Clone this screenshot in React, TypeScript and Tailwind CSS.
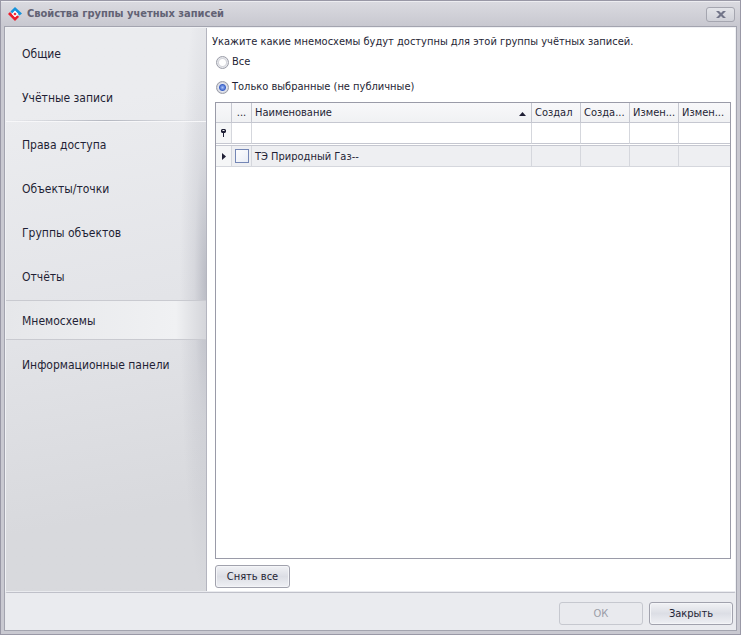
import React, { useState } from "react";
import clsx from "clsx";

const accountPages = ["Общие", "Учётные записи"];
const accessPages = [
  "Права доступа",
  "Объекты/точки",
  "Группы объектов",
  "Отчёты",
  "Мнемосхемы",
  "Информационные панели",
];

const columns = ["Создал", "Созда...", "Измен...", "Измен..."];

const schemes = [{ id: 1, name: "ТЭ Природный Газ--" }];

function Logo() {
  return (
    <svg width="14" height="14" viewBox="0 0 14 14" aria-hidden="true">
      <path d="M7 0L14 6.5L11.5 8.5L7 4L4.5 6.5L2.4 4.6Z" fill="#1593dc" />
      <path d="M2 5L7 10.2L9 8.4L11.2 9.8L7 14L0 7Z" fill="#ec1c2b" />
      <path d="M7 3.6L10.4 7L7 10.2L3.8 7Z" fill="#fff" />
      <path d="M7 5.4L8.6 7L7 8.6L5.4 7Z" fill="#ec1c2b" />
    </svg>
  );
}

function NavItem({
  title,
  active,
  onClick,
}: {
  title: string;
  active: boolean;
  onClick: () => void;
}) {
  return (
    <button
      type="button"
      onClick={onClick}
      className={clsx(
        "h-10 w-full border-y pt-[2px] pl-4 text-left text-[12px]",
        active
          ? "border-[#c9cad0] bg-linear-to-r from-[#e6e7ea] via-[#f0f1f3] via-85% to-[#d4d5da]"
          : "border-transparent"
      )}
    >
      {title}
    </button>
  );
}

function DialogButton({
  children,
  className,
  disabled,
}: {
  children: React.ReactNode;
  className: string;
  disabled?: boolean;
}) {
  return (
    <button
      type="button"
      disabled={disabled}
      className={clsx(
        "h-[23px] rounded-[3px] border pt-[2px]",
        disabled
          ? "border-[#c6c8cf] bg-[#e9eaee] text-[#9b9da8]"
          : "border-[#a1a2ad] bg-linear-to-b from-[#f1f2f5] via-[#dcdee5] to-[#eff0f4] shadow-[inset_0_0_0_1px_#f4f5f8]",
        className
      )}
    >
      {children}
    </button>
  );
}

function Radio({
  label,
  checked,
  onChange,
}: {
  label: string;
  checked: boolean;
  onChange: () => void;
}) {
  return (
    <label className="flex h-[25px] items-center gap-[3px] pl-1">
      <input
        type="radio"
        name="scope"
        checked={checked}
        onChange={onChange}
        className="size-[13px] appearance-none rounded-full border border-[#9b9da8] bg-[radial-gradient(circle,#ffffff_3px,#d4d5db_4px,#e6e7eb_5px)] checked:bg-[radial-gradient(circle_at_center,#a9c4fa_0px,#3c62c8_3px,#e4e6ee_4px,#c9cbd3_6px)]"
      />
      {label}
    </label>
  );
}

export default function App() {
  const [page, setPage] = useState("Мнемосхемы");
  const [scope, setScope] = useState("selected");
  const [selected, setSelected] = useState<number[]>([]);

  const toggle = (id: number) =>
    setSelected((ids) =>
      ids.includes(id) ? ids.filter((i) => i !== id) : [...ids, id]
    );

  return (
    <div className="flex h-screen flex-col border border-[#9998a6] bg-[#c9c9d1] font-['DejaVu_Sans_Condensed','DejaVu_Sans',sans-serif] text-[11px] text-[#1f1f35]">
      <header className="flex h-[25px] shrink-0 items-center gap-[5px] border-t border-[#ededf1] bg-linear-to-b from-[#dadae0] to-[#c8c8d0] pr-[5px] pl-[7px]">
        <Logo />
        <h1 className="flex-1 pt-px font-bold text-[#626274]">
          Свойства группы учетных записей
        </h1>
        <button
          type="button"
          aria-label="Закрыть окно"
          className="flex h-[15px] w-[29px] items-center justify-center rounded-[3px] border border-[#a5a6b0] bg-linear-to-b from-[#e3e4e9] to-[#d0d1d8]"
        >
          <svg width="10" height="7" viewBox="0 0 10 7">
            <path d="M0 0H3L5 2L7 0H10L6.5 3.5L10 7H7L5 5L3 7H0L3.5 3.5Z" fill="#73768a" />
          </svg>
        </button>
      </header>

      <div className="mx-[3px] mb-[3px] flex min-h-0 flex-1 flex-col border border-[#a3a4af] bg-[#eaebef]">
        <div className="flex min-h-0 flex-1 rounded-[2px] border border-[#f0f1f4] border-b-[#bfc0c9] pb-px">
          <nav className="w-[201px] shrink-0 border-r border-[#b4b5bf] bg-linear-170 from-[#ebecef] from-15% via-[#e3e4e8] via-50% to-[#d8d9dd] to-85%">
            <div className="flex h-full flex-col gap-1 bg-[radial-gradient(26px_56%_at_right_45%,#a0a2ae99,#a0a2ae33_45%,#a0a2ae00)] pt-[5px]">
              {accountPages.map((p) => (
                <NavItem key={p} title={p} active={p === page} onClick={() => setPage(p)} />
              ))}
              <div className="-my-px h-px bg-linear-to-r from-transparent via-[#b5b8c1] to-transparent shadow-[0_1px_0_#f7f7f9]" />
              {accessPages.map((p) => (
                <NavItem key={p} title={p} active={p === page} onClick={() => setPage(p)} />
              ))}
            </div>
          </nav>

          <main className="flex min-w-0 flex-1 flex-col bg-white pt-[6px] pr-1 pb-[3px] pl-[5px]">
            <p className="h-4 leading-4">
              Укажите какие мнемосхемы будут доступны для этой группы учётных записей.
            </p>
            <Radio label="Все" checked={scope === "all"} onChange={() => setScope("all")} />
            <Radio
              label="Только выбранные (не публичные)"
              checked={scope === "selected"}
              onChange={() => setScope("selected")}
            />

            <div className="mt-[2px] ml-[3px] min-h-0 flex-1 overflow-hidden border border-[#9a9ba8]">
              <table className="w-full table-fixed border-separate border-spacing-0 text-left">
                <colgroup>
                  <col className="w-4" />
                  <col className="w-5" />
                  <col />
                  <col className="w-[49px]" />
                  <col className="w-[49px]" />
                  <col className="w-[49px]" />
                  <col className="w-[51px]" />
                </colgroup>
                <thead>
                  <tr className="h-5 bg-linear-to-b from-[#f8f8fa] to-[#f0f1f3] *:border-r *:border-b *:border-[#c5c7d0] *:p-0 *:pt-[2px] *:font-normal *:last:border-r-0">
                    <th />
                    <th className="text-center">...</th>
                    <th>
                      <div className="flex items-center justify-between pr-[5px] pl-[3px]">
                        Наименование
                        <svg width="7" height="4" viewBox="0 0 7 4">
                          <path d="M3.5 0L7 4H0Z" fill="#1f1f35" />
                        </svg>
                      </div>
                    </th>
                    {columns.map((t, i) => (
                      <th key={i}>
                        <div className="overflow-hidden pl-[3px] whitespace-nowrap">{t}</div>
                      </th>
                    ))}
                  </tr>
                </thead>
                <tbody>
                  <tr className="h-[21px] *:border-r *:border-b *:border-[#d5d7dd] *:border-b-[#c5c7d0] *:p-0 *:last:border-r-0">
                    <td className="bg-[#f5f6f7]">
                      <svg className="mx-auto" width="5" height="8" viewBox="0 0 5 8">
                        <path d="M1 0H4L5 1V3L4 4H3V8H2V4H1L0 3V1ZM1.5 1V2H3.5V1Z" fill="#1f1f35" fillRule="evenodd" />
                      </svg>
                    </td>
                    <td />
                    <td />
                    {columns.map((_, i) => (
                      <td key={i} />
                    ))}
                  </tr>
                  <tr className="h-[2px] *:border-b *:border-[#c5c7d0] *:p-0">
                    <td colSpan={7} />
                  </tr>
                  {schemes.map((s) => (
                    <tr
                      key={s.id}
                      className="h-[21px] bg-[#eeeff2] *:border-r *:border-b *:border-[#d5d7dd] *:p-0 *:last:border-r-0"
                    >
                      <td className="bg-[#f5f6f7]">
                        <svg className="mx-auto" width="4" height="7" viewBox="0 0 4 7">
                          <path d="M0 0L4 3.5L0 7Z" fill="#1f1f35" />
                        </svg>
                      </td>
                      <td>
                        <input
                          type="checkbox"
                          aria-label={s.name}
                          checked={selected.includes(s.id)}
                          onChange={() => toggle(s.id)}
                          className="mx-auto block size-[14px] appearance-none border border-[#7486b5] bg-linear-to-br from-[#fdfdfe] to-[#e9edf6] checked:bg-[#7486b5]"
                        />
                      </td>
                      <td>
                        <div className="pt-[2px] pl-[3px]">{s.name}</div>
                      </td>
                      {columns.map((_, i) => (
                        <td key={i} />
                      ))}
                    </tr>
                  ))}
                </tbody>
              </table>
            </div>

            <div className="mt-[6px] ml-[3px] flex">
              <DialogButton className="w-[75px]">Снять все</DialogButton>
            </div>
          </main>
        </div>

        <footer className="flex h-[37px] shrink-0 items-center justify-end gap-[6px] pt-1 pr-[3px]">
          <DialogButton className="w-[84px]" disabled>
            ОК
          </DialogButton>
          <DialogButton className="w-[84px]">Закрыть</DialogButton>
        </footer>
      </div>
    </div>
  );
}
